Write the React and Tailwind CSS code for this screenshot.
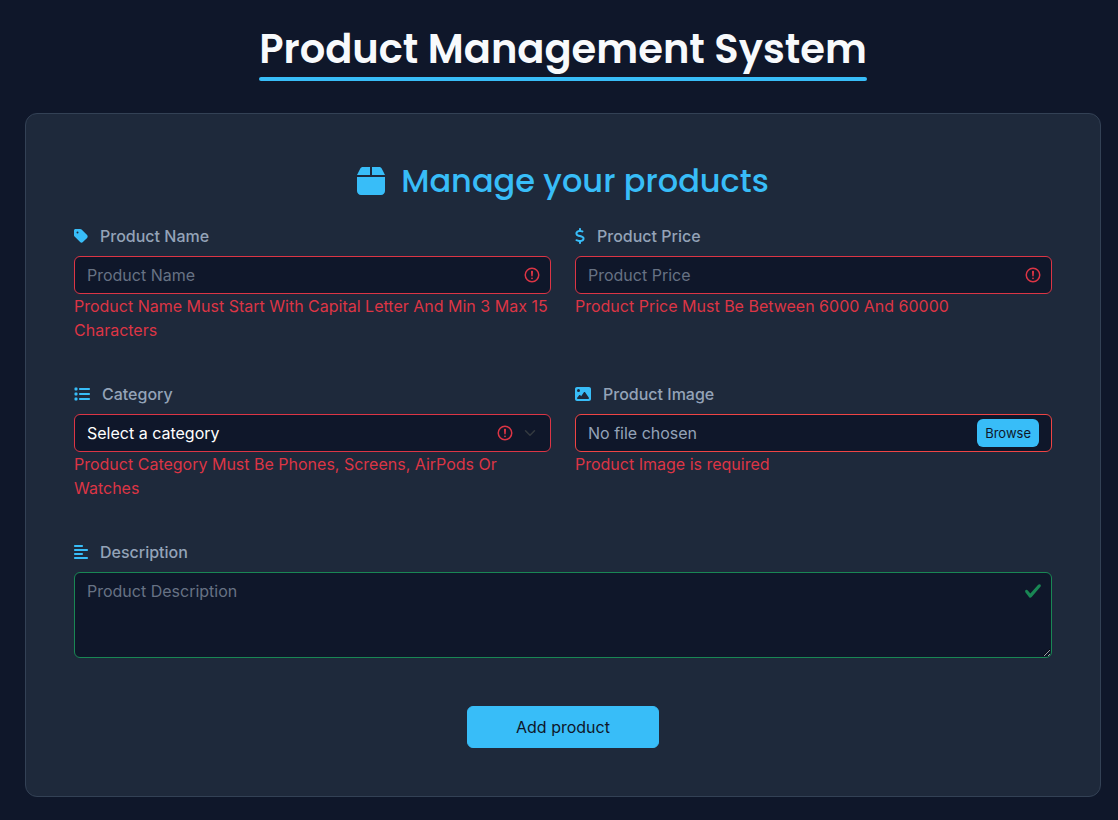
import { useRef, useState } from "react";
import { FaAlignLeft, FaBox, FaDollarSign, FaImage, FaList, FaTag } from "react-icons/fa6";

const CATEGORIES = ["Phones", "Screens", "AirPods", "Watches"];

function InvalidIcon() {
  return (
    <svg viewBox="0 0 12 12" className="size-[18px] fill-none stroke-[#dc3545]" aria-hidden="true">
      <circle cx="6" cy="6" r="4.5" />
      <path strokeLinejoin="round" d="M5.8 3.6h.4L6 6.5z" />
      <circle cx="6" cy="8.2" r=".6" fill="#dc3545" stroke="none" />
    </svg>
  );
}

function ValidIcon() {
  return (
    <svg viewBox="0 0 8 8" className="size-[18px] fill-[#198754]" aria-hidden="true">
      <path d="M2.3 6.73.6 4.53c-.4-1.04.46-1.4 1.1-.8l1.1 1.4 3.4-3.8c.6-.63 1.6-.27 1.2.7l-4 4.6c-.43.5-.8.4-1.1.1z" />
    </svg>
  );
}

function Field({ id, label, icon: Icon, iconWidth = "w-4", error, children }) {
  return (
    <div>
      <label htmlFor={id} className="mb-2 flex items-center gap-3 font-medium text-[#94a3b8]">
        <Icon className={`h-4 text-[#38bdf8] ${iconWidth}`} aria-hidden="true" />
        {label}
      </label>
      {children}
      {error && <p className="text-[#dc3545]">{error}</p>}
    </div>
  );
}

function TextField({ id, label, icon, iconWidth, error }) {
  return (
    <Field id={id} label={label} icon={icon} iconWidth={iconWidth} error={error}>
      <div className="relative">
        <input
          id={id}
          type="text"
          placeholder={label}
          aria-invalid="true"
          className="block w-full rounded-md border border-[#dc3545] bg-[#0f172a] py-1.5 pr-9 pl-3 text-slate-50 placeholder:text-[#677284]"
        />
        <span className="pointer-events-none absolute inset-y-0 right-2.5 flex items-center">
          <InvalidIcon />
        </span>
      </div>
    </Field>
  );
}

function FileField() {
  const input = useRef(null);
  const [fileName, setFileName] = useState("No file chosen");
  return (
    <Field id="image" label="Product Image" icon={FaImage} error="Product Image is required">
      <div className="relative flex h-[38px] items-center justify-between rounded-md border border-[#ef4444] bg-[#0f172a] px-3">
        <input
          ref={input}
          id="image"
          type="file"
          className="sr-only"
          onChange={(e) => setFileName(e.target.files[0]?.name ?? "No file chosen")}
        />
        <span className="text-[#94a3b8]">{fileName}</span>
        <button
          type="button"
          onClick={() => input.current.click()}
          className="rounded-md bg-[#38bdf8] px-2 py-1 text-[13px] leading-5 text-[#0f172a]"
        >
          Browse
        </button>
      </div>
    </Field>
  );
}

export default function App() {
  return (
    <div className="min-h-screen bg-[#0f172a] pt-6 pr-[17px] pb-6 pl-[25px] font-[Inter,sans-serif] text-base text-[#f8fafc]">
      <header className="mb-8 flex justify-center">
        <h1 className="font-[Poppins,Inter,sans-serif] text-[40px] leading-[50px] font-semibold whitespace-nowrap">
          Product Management System
          <span className="mt-[3px] block h-1 rounded-sm bg-[#38bdf8]" />
        </h1>
      </header>

      <main className="rounded-xl border border-[#334155] bg-[#1e293b] p-12">
        <h2 className="mb-6 flex items-center justify-center gap-4 font-[Poppins,Inter,sans-serif] text-[32px] leading-[38px] font-medium text-[#38bdf8]">
          <FaBox className="h-8 w-7" aria-hidden="true" />
          Manage your products
        </h2>

        <form onSubmit={(e) => e.preventDefault()}>
          <div className="grid grid-cols-2 gap-x-6 gap-y-10">
            <TextField
              id="name"
              label="Product Name"
              icon={FaTag}
              iconWidth="w-3.5"
              error="Product Name Must Start With Capital Letter And Min 3 Max 15 Characters"
            />
            <TextField
              id="price"
              label="Product Price"
              icon={FaDollarSign}
              iconWidth="w-2.5"
              error="Product Price Must Be Between 6000 And 60000"
            />
            <Field
              id="category"
              label="Category"
              icon={FaList}
              error="Product Category Must Be Phones, Screens, AirPods Or Watches"
            >
              <div className="relative">
                <select
                  id="category"
                  defaultValue=""
                  aria-invalid="true"
                  className="block h-[38px] w-full appearance-none rounded-md border border-[#dc3545] bg-[#0f172a] py-1.5 pr-16 pl-3 text-white"
                >
                  <option value="">Select a category</option>
                  {CATEGORIES.map((name) => (
                    <option key={name}>{name}</option>
                  ))}
                </select>
                <span className="pointer-events-none absolute inset-y-0 right-[15px] flex items-center gap-2.5">
                  <InvalidIcon />
                  <svg viewBox="0 0 16 16" className="size-3 fill-none stroke-[#343a40] stroke-2" aria-hidden="true">
                    <path strokeLinecap="round" strokeLinejoin="round" d="m2 5 6 6 6-6" />
                  </svg>
                </span>
              </div>
            </Field>
            <FileField />
            <div className="col-span-2">
              <Field id="description" label="Description" icon={FaAlignLeft} iconWidth="w-3.5">
                <div className="relative">
                  <textarea
                    id="description"
                    rows={3}
                    placeholder="Product Description"
                    className="block h-[86px] w-full resize-y rounded-md border border-[#198754] bg-[#0f172a] py-1.5 pr-9 pl-3 text-slate-50 placeholder:text-[#677284]"
                  />
                  <span className="pointer-events-none absolute top-2.5 right-2.5">
                    <ValidIcon />
                  </span>
                </div>
              </Field>
            </div>
          </div>
          <div className="mt-12 flex justify-center">
            <button
              type="submit"
              className="rounded-md border border-[#38bdf8] bg-[#38bdf8] px-12 py-2 text-[#0f172a]"
            >
              Add product
            </button>
          </div>
        </form>
      </main>
    </div>
  );
}
